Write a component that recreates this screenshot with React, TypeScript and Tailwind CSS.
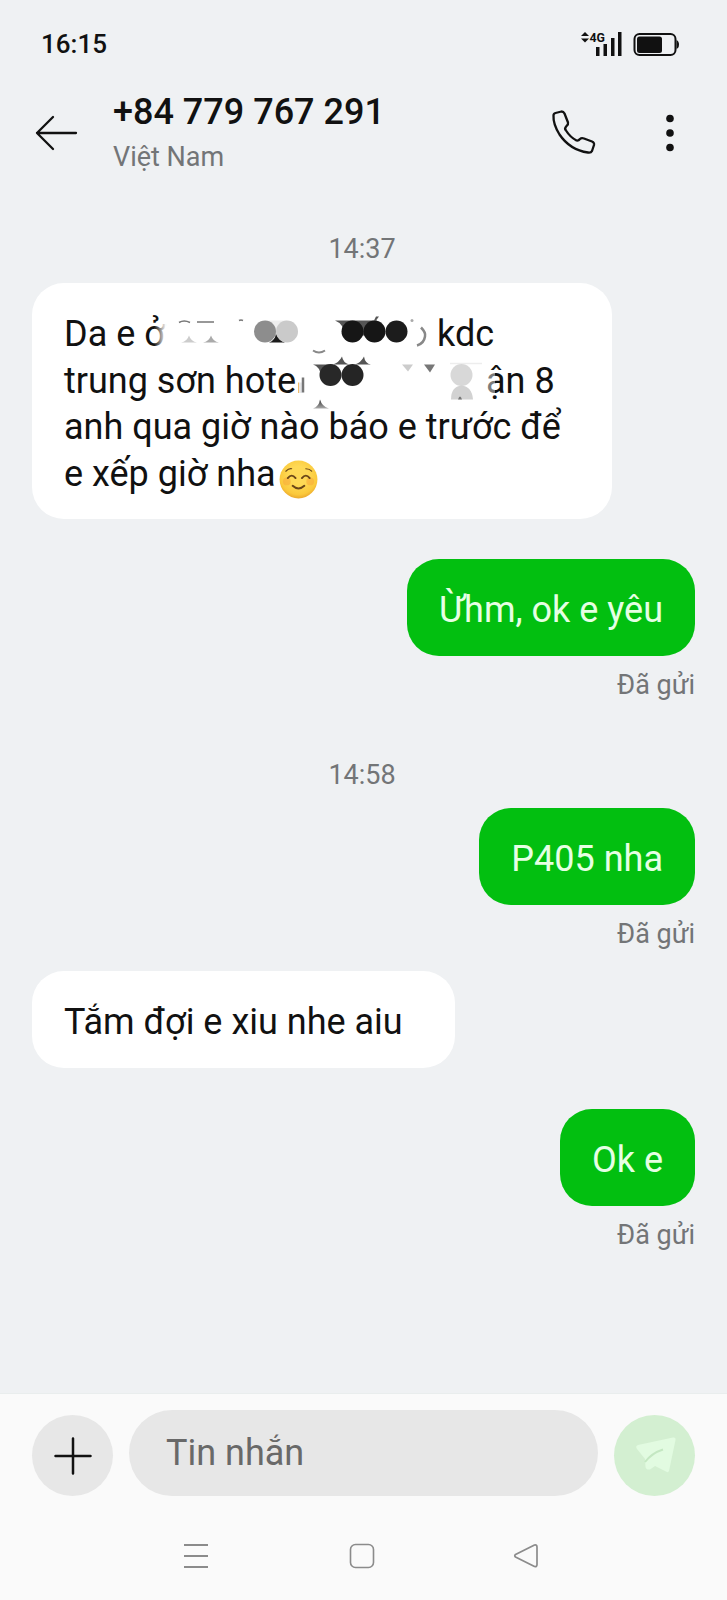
import React from "react";

function Sent({ text, className }: { text: string; className: string }) {
  return (
    <div className={`flex flex-col items-end ${className}`}>
      <div className="flex h-[97px] items-center rounded-[32px] bg-[#02bf10] px-[32px] text-[36px] text-[#e6ffe4]">
        <span className="relative top-[2px] whitespace-nowrap">{text}</span>
      </div>
      <div className="mt-[12px] h-[34px] text-[27px] leading-[34px] text-[#737577]">Đã gửi</div>
    </div>
  );
}

function Emoji() {
  return (
    <svg viewBox="0 0 40 40" className="-mb-[7px] ml-[3px] inline-block h-[39px] w-[39px]">
      <defs>
        <radialGradient id="face" cx="50%" cy="40%" r="62%">
          <stop offset="0.4" stopColor="#fed955" />
          <stop offset="0.8" stopColor="#fbc93b" />
          <stop offset="1" stopColor="#e8a32b" />
        </radialGradient>
      </defs>
      <circle cx="20" cy="20" r="19.4" fill="url(#face)" />
      <circle cx="8" cy="22" r="4" fill="#f9ab3a" opacity="0.6" />
      <circle cx="32" cy="22" r="4" fill="#f9ab3a" opacity="0.6" />
      <g fill="none" stroke="#6b4718" strokeLinecap="round">
        <path d="M9 18.5q4-5 8 0M23.500 18.500q4-5 8 0M14 26.500q6 5.500 12 0" strokeWidth="2" />
        <path d="M7 11.500q3-3 6-2.500M27.500 9q4 0 6 2.500" strokeWidth="1.200" />
      </g>
    </svg>
  );
}

function Redaction() {
  return (
    <svg viewBox="32 283 580 235" className="absolute inset-0 h-full w-full">
      <defs>
        <linearGradient id="fade" x1="0" x2="1">
          <stop offset="0" stopColor="#fff" stopOpacity="0" />
          <stop offset="1" stopColor="#fff" />
        </linearGradient>
        <linearGradient id="tip" x1="0" x2="0" y1="0" y2="1">
          <stop offset="0" stopColor="#333" />
          <stop offset="1" stopColor="#aaa" />
        </linearGradient>
      </defs>
      <rect x="154" y="322" width="12" height="28" fill="url(#fade)" />
      <path d="M179 322q5-3 11 0M197 321.500h17M239 320q2-1 4 0" fill="none" stroke="#777" strokeWidth="1.500" />
      <path d="M181 342q6-1 8-7q2 6 8 7z" fill="#ccc" />
      <path d="M203 342q6-1 8-7q2 6 8 7z" fill="#aaa" />
      <path d="M265 320h22l-11 13z" fill="#eee" />
      <path d="M269 342q6-2 7-9q3 7 9 9z" fill="#1b1b1b" />
      <circle cx="265" cy="331" r="11" fill="#8d8d8d" />
      <circle cx="287" cy="331" r="11" fill="#cacaca" />
      <path d="M335 320h42l-6 15h-25q-3-12-11-15z" fill="#555" />
      <path d="M374 320l2-4l3 0l-3 4z" fill="#555" />
      <circle cx="352.500" cy="331" r="11" fill="#161616" />
      <circle cx="374.500" cy="331" r="11" fill="#161616" />
      <circle cx="396.500" cy="331" r="11" fill="#1c1c1c" />
      <circle cx="412" cy="320" r="1.500" fill="#aaa" />
      <path d="M421 327q5 5 4 9q-1 7-8 9" fill="none" stroke="#888" strokeWidth="2.500" />
      <path d="M313 350q6 4 12 0" fill="none" stroke="#888" strokeWidth="2" />
      <path d="M313 364h58q-6-1-7-8q-3 6-9 8h-6q-6-2-7-8q-3 6-9 8l-12 12q-1-10-8-12z" fill="#555" />
      <path d="M313 408q6-2 7-9q2 7 9 9z" fill="url(#tip)" />
      <circle cx="330.500" cy="374.500" r="11" fill="#282828" />
      <circle cx="352.500" cy="374.500" r="11" fill="#252525" />
      <rect x="297" y="363" width="6" height="19" fill="#fff" />
      <rect x="299" y="363" width="10" height="32" fill="#fff" opacity="0.900" />
      <path d="M303 377v15" stroke="#777" strokeWidth="2.500" />
      <path d="M402 364h11l-5 7z" fill="#ccc" />
      <path d="M424 364h11l-5 8z" fill="#777" />
      <path d="M450 363h32" stroke="#ededed" strokeWidth="1.500" />
      <circle cx="461.500" cy="374.500" r="11" fill="#d8d8d8" />
      <path d="M451 399q0-13 10.500-14q10.500 1 11.500 14z" fill="#d2d2d2" />
      <path d="M458 399q1-3 2-3t2 3z" fill="#777" />
      <rect x="484" y="372" width="11" height="22" fill="#fff" opacity="0.450" />
    </svg>
  );
}

export default function App() {
  return (
    <div
      className="flex h-[1600px] w-[727px] flex-col overflow-hidden bg-[#eff1f3] text-[#111]"
      style={{ fontFamily: 'Roboto, "Liberation Sans", sans-serif' }}
    >
      <header className="h-[208px] shrink-0">
        <div className="flex h-[88px] items-center justify-between pr-[48px] pl-[41px]">
          <span className="text-[26px] font-medium">16:15</span>
          <svg viewBox="0 0 100 30" className="h-[30px] w-[100px]" fill="#111">
            <path d="M2 7l4-4l4 4zM2 9.500l4 4l4-4z" />
            <text x="10.500" y="12.500" fontSize="13.500" fontWeight="700" textLength="15.500" lengthAdjust="spacingAndGlyphs">4G</text>
            <rect x="17" y="18" width="3.500" height="9" />
            <rect x="24.500" y="15" width="3.500" height="12" />
            <rect x="32" y="9" width="3.500" height="18" />
            <rect x="39" y="3" width="3.500" height="24" />
            <rect x="55.500" y="5" width="41" height="21" rx="5" fill="none" stroke="#111" strokeWidth="2" />
            <rect x="58" y="7.500" width="25" height="16.500" rx="2.500" />
            <path d="M97.500 11q2.500 1 2.500 4.500t-2.500 4.500z" />
          </svg>
        </div>
        <div className="flex h-[90px] items-center">
          <svg viewBox="0 0 44 36" className="ml-[35px] h-[36px] w-[44px]" fill="none" stroke="#111" strokeWidth="2.300" strokeLinecap="round" strokeLinejoin="round">
            <path d="M18 2L2 18l16 16M2 18h39" />
          </svg>
          <div className="ml-[34px] grow">
            <div className="h-[48px] text-[36px] leading-[48px] font-medium whitespace-nowrap">+84 779 767 291</div>
            <div className="h-[42px] text-[27px] leading-[42px] text-[#737577]">Việt Nam</div>
          </div>
          <svg viewBox="0 0 46 46" className="mr-[69px] h-[46px] w-[46px]" fill="none" stroke="#111" strokeWidth="2.300" strokeLinejoin="round">
            <path d="M2.500 5.500Q2.500 3.500 4.500 3L10.500 1.500Q12.500 1.500 13.500 3.500L17 12.500Q17.500 14.500 15.500 16Q13 18.500 15 20.500Q19 27 25.500 30.500Q27.500 31 29 29Q30.500 27.500 33 28.500L41 31.500Q43.500 32.500 43 35L41 41Q40 43 37 42.500Q19 40 8.500 24.500Q2 14 2.500 5.500z" />
          </svg>
          <svg viewBox="0 0 8 38" className="mr-[53px] h-[38px] w-[8px]" fill="#111">
            <circle cx="4" cy="4.500" r="3.800" />
            <circle cx="4" cy="19" r="3.800" />
            <circle cx="4" cy="33.500" r="3.800" />
          </svg>
        </div>
      </header>

      <main className="flex h-[1185px] shrink-0 flex-col px-[32px]">
        <div className="mt-[23px] h-[36px] pr-[3px] text-center text-[27px] leading-[36px] text-[#737577]">14:37</div>
        <div className="relative mt-[16px] h-[236px] w-[580px] rounded-[32px] bg-white px-[32px] pt-[28px] text-[36px] leading-[46.500px]">
          <div className="flex whitespace-nowrap">
            <span className="w-[373px]">Da e ở</span>
            <span>kdc</span>
          </div>
          <div className="flex whitespace-nowrap">
            <span className="w-[422px]">trung sơn hotel</span>
            <span>ận 8</span>
          </div>
          <div className="whitespace-nowrap">anh qua giờ nào báo e trước để</div>
          <div className="whitespace-nowrap">e xếp giờ nha<Emoji /></div>
          <Redaction />
        </div>
        <Sent text="Ừhm, ok e yêu" className="mt-[40px]" />
        <div className="relative mt-[55px] h-[36px] pr-[3px] text-center text-[27px] leading-[36px] text-[#737577]">
          14:58
        </div>
        <Sent text="P405 nha" className="mt-[15px]" />
        <div className="mt-[20px] flex h-[97px] w-[423px] items-center rounded-[32px] bg-white px-[32px] text-[36px]">
          <span className="relative top-[2px] whitespace-nowrap">Tắm đợi e xiu nhe aiu</span>
        </div>
        <Sent text="Ok e" className="mt-[41px]" />
      </main>

      <footer className="flex h-[207px] flex-col border-t border-[#e9eded] bg-[#fafafa]">
        <div className="mt-[15px] flex h-[87px] items-end px-[32px]">
          <div className="flex h-[81px] w-[81px] items-center justify-center rounded-full bg-[#e7e7e7]">
            <svg viewBox="0 0 40 40" className="h-[40px] w-[40px]" fill="none" stroke="#111" strokeWidth="2.500" strokeLinecap="round">
              <path d="M20 2.500v35M2.500 20h35" />
            </svg>
          </div>
          <div className="ml-[16px] flex h-[86px] w-[469px] items-center rounded-[43px] bg-[#e7e7e7] pl-[37px] text-[36px] text-[#696969]">
            Tin nhắn
          </div>
          <div className="ml-[16px] flex h-[81px] w-[81px] items-center justify-center rounded-full bg-[#d3efd1]">
            <svg viewBox="0 0 81 81" className="h-[81px] w-[81px]">
              <path d="M24 30L59 22.500Q62 22 61.500 25L55 56Q54 58 52 56.500L41 51L36 54.500Q32 55 31.500 52L31 44L23 34Q21 31 24 30z" fill="#e2fbe1" />
              <path d="M31 47Q38 38 49 34.500" fill="none" stroke="#c4e7c2" strokeWidth="2" />
            </svg>
          </div>
        </div>
        <div className="mt-[47px] flex h-[26px] pl-[183px]">
          <svg viewBox="0 0 26 26" className="h-[26px] w-[26px]" stroke="#8b8b8b" strokeWidth="1.800">
            <path d="M1 2h24M1 13h24M1 24h24" />
          </svg>
          <svg viewBox="0 0 26 26" className="ml-[140px] h-[26px] w-[26px]" fill="none" stroke="#8b8b8b" strokeWidth="1.600">
            <rect x="1.500" y="1.500" width="23" height="23" rx="5" />
          </svg>
          <svg viewBox="0 0 26 26" className="ml-[138px] h-[26px] w-[26px]" fill="none" stroke="#8b8b8b" strokeWidth="1.700" strokeLinejoin="round">
            <path d="M2.500 11.500L21.500 2Q24 1.500 24 4V21.500Q24 24 21.500 23.500L2.500 14Q1 12.700 2.500 11.500z" />
          </svg>
        </div>
      </footer>
    </div>
  );
}
